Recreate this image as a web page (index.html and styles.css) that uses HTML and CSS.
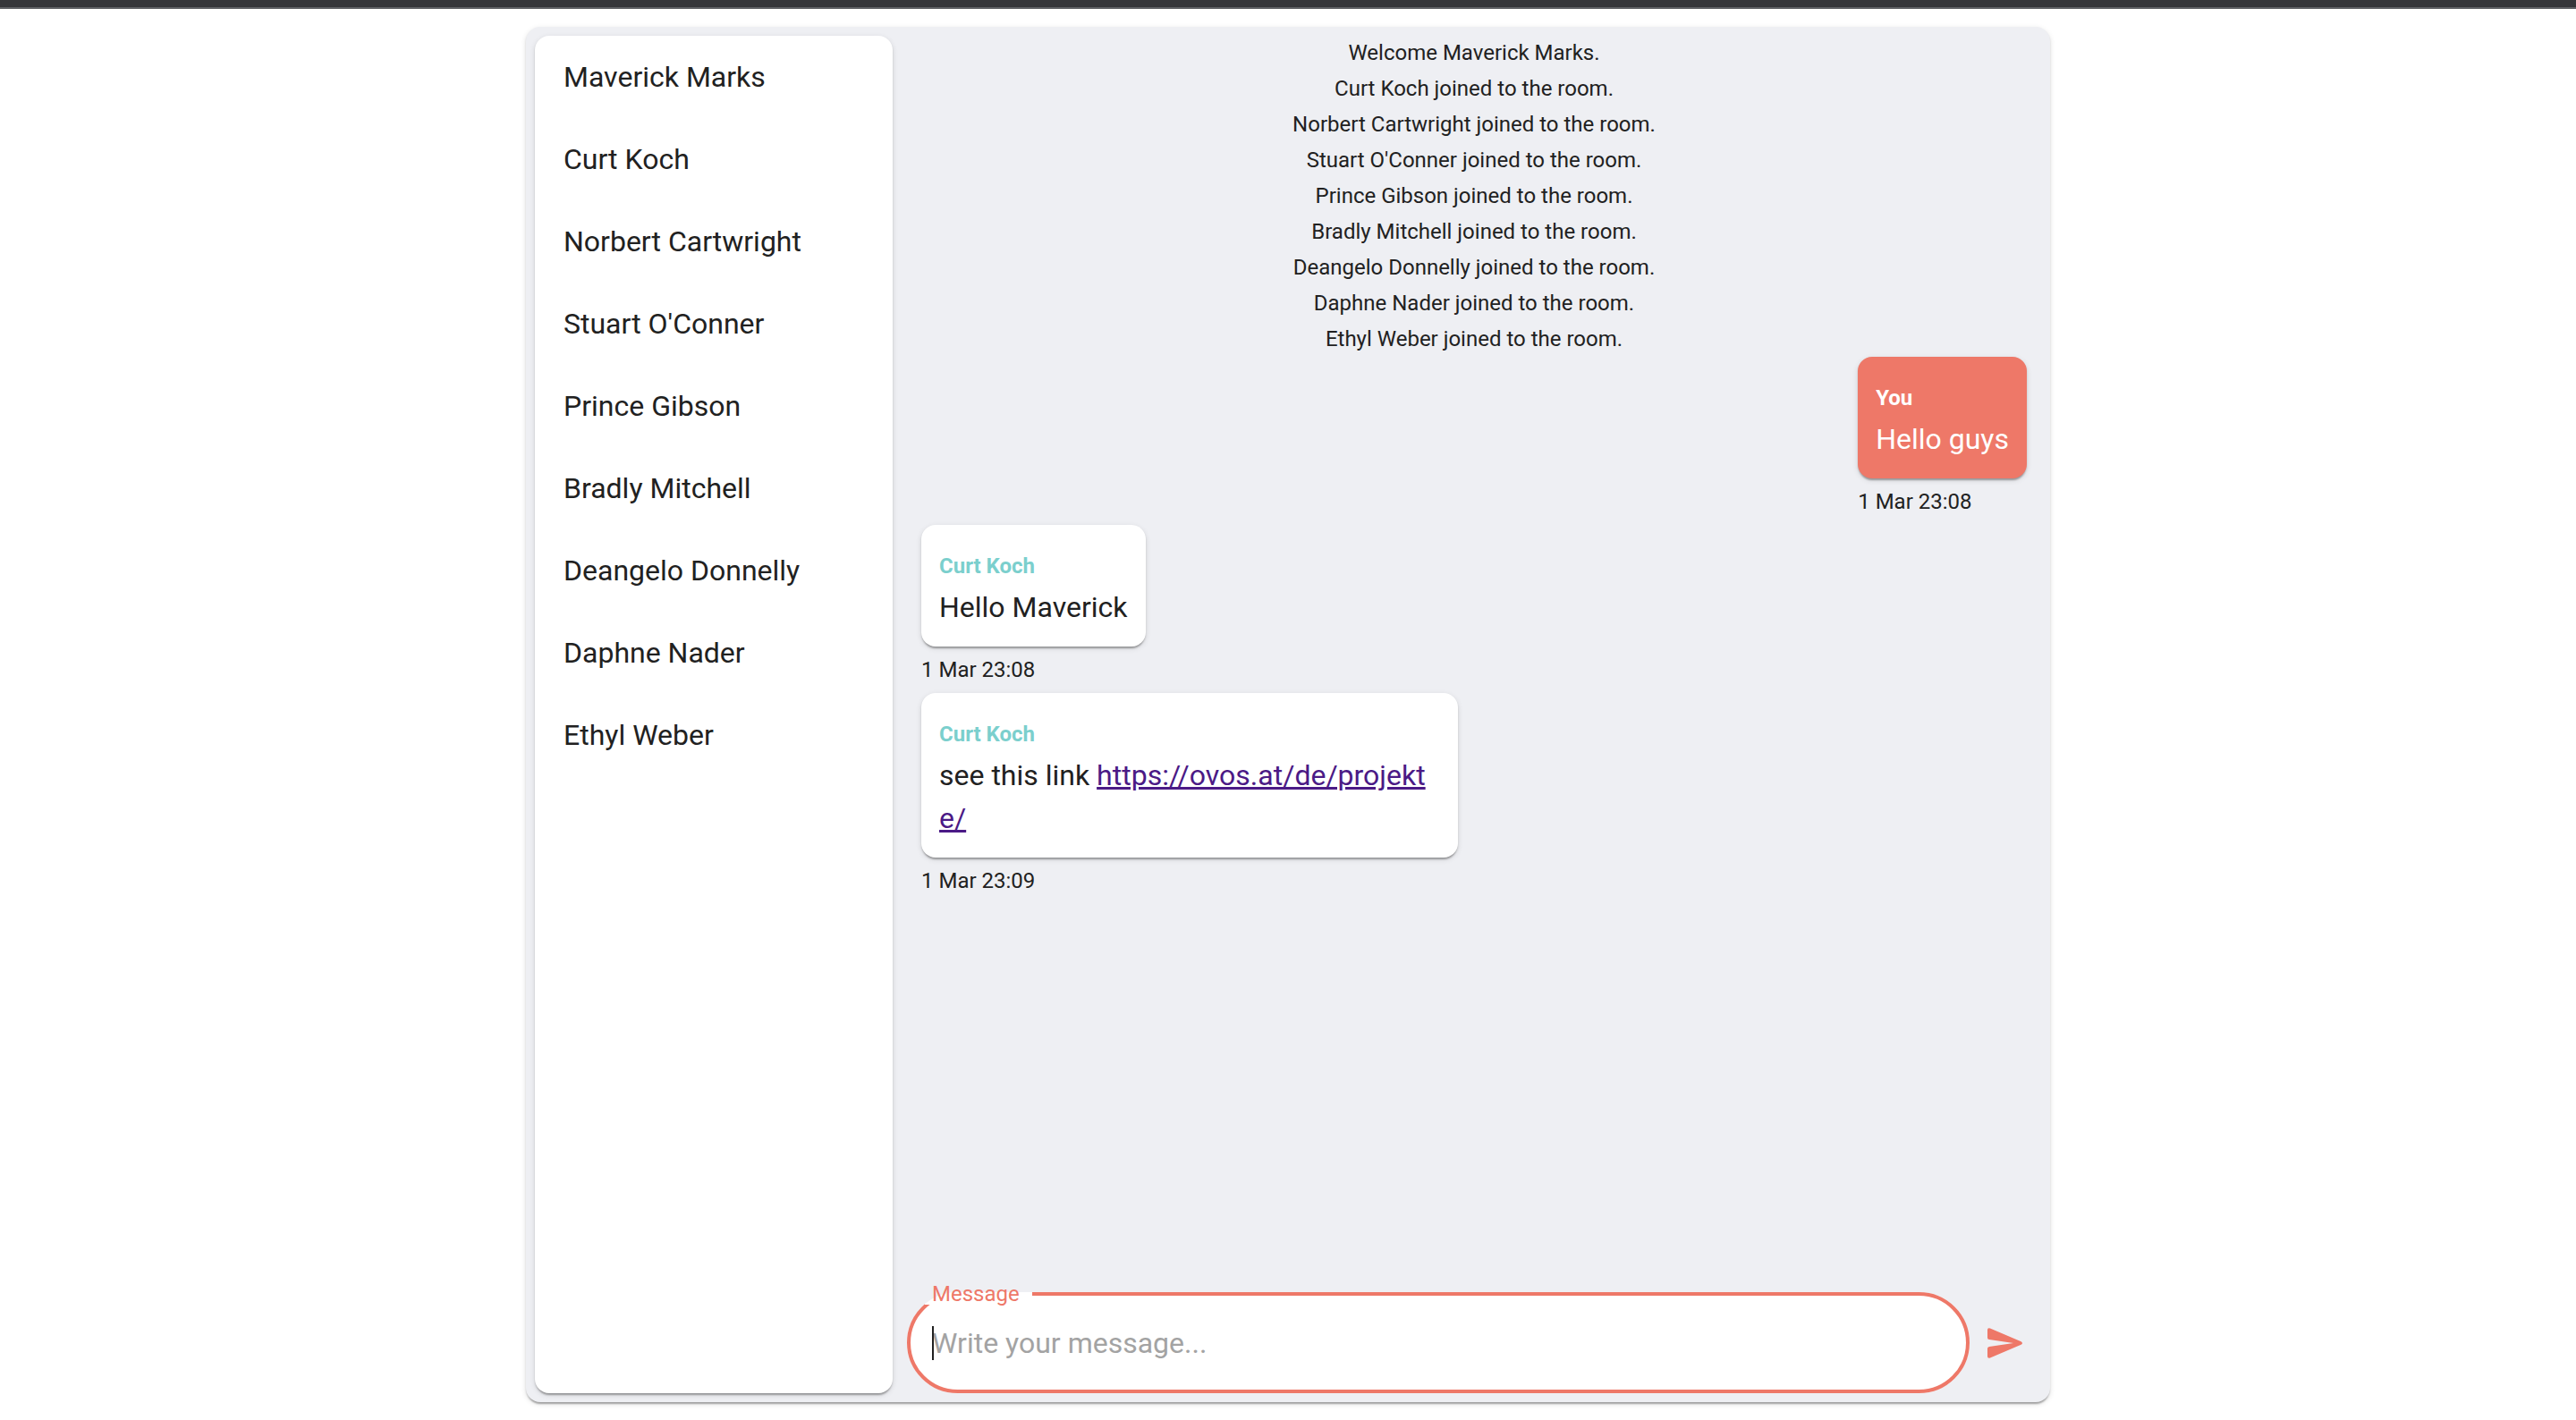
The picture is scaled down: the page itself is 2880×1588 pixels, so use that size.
FILE: index.html
```html
<!DOCTYPE html>
<html lang="en">
<head>
<meta charset="utf-8">
<title>Chat room</title>
<link rel="stylesheet" href="styles.css">
</head>
<body>
<div class="topbar"></div>
<main class="room">
  <ul class="members">
    <li>Maverick Marks</li>
    <li>Curt Koch</li>
    <li>Norbert Cartwright</li>
    <li>Stuart O'Conner</li>
    <li>Prince Gibson</li>
    <li>Bradly Mitchell</li>
    <li>Deangelo Donnelly</li>
    <li>Daphne Nader</li>
    <li>Ethyl Weber</li>
  </ul>
  <section class="chat">
    <div class="log">
      <p class="notice">Welcome Maverick Marks.</p>
      <p class="notice">Curt Koch joined to the room.</p>
      <p class="notice">Norbert Cartwright joined to the room.</p>
      <p class="notice">Stuart O'Conner joined to the room.</p>
      <p class="notice">Prince Gibson joined to the room.</p>
      <p class="notice">Bradly Mitchell joined to the room.</p>
      <p class="notice">Deangelo Donnelly joined to the room.</p>
      <p class="notice">Daphne Nader joined to the room.</p>
      <p class="notice">Ethyl Weber joined to the room.</p>
      <article class="message message-own">
        <div class="bubble">
          <h2 class="author">You</h2>
          <p class="text">Hello guys</p>
        </div>
        <time class="time">1 Mar 23:08</time>
      </article>
      <article class="message">
        <div class="bubble">
          <h2 class="author">Curt Koch</h2>
          <p class="text">Hello Maverick</p>
        </div>
        <time class="time">1 Mar 23:08</time>
      </article>
      <article class="message">
        <div class="bubble">
          <h2 class="author">Curt Koch</h2>
          <p class="text">see this link <a class="link" href="https://ovos.at/de/projekte/">https://ovos.at/de/projekte/</a></p>
        </div>
        <time class="time">1 Mar 23:09</time>
      </article>
    </div>
    <form class="composer">
      <fieldset class="field">
        <legend class="legend"><label for="message">Message</label></legend>
        <div class="entry">
          <span class="caret"></span>
          <input class="input" id="message" type="text" placeholder="Write your message..." autocomplete="off">
        </div>
      </fieldset>
      <button class="send" type="button" aria-label="Send">
        <svg class="send-icon" viewBox="0 0 40 34" aria-hidden="true">
          <path d="M0 2.2Q0-.6 3 .4L37.6 15.2Q40.4 17 37.6 18.8L3 33.6Q0 34.6 0 31.8V23Q0 21.2 2 20.9L29 17 2 13.1Q0 12.8 0 11Z"/>
        </svg>
      </button>
    </form>
  </section>
</main>
</body>
</html>
```
FILE: styles.css
```css
:root {
  --coral: #ee7868;
  --teal: #7bcfcd;
  --ink: #212121;
  --surface: #eeeff3;
  --shadow: 0 4px 2px -2px rgba(0, 0, 0, 0.2), 0 2px 2px rgba(0, 0, 0, 0.14), 0 2px 6px rgba(0, 0, 0, 0.12);
}

* {
  box-sizing: border-box;
}

body {
  display: flex;
  flex-direction: column;
  min-height: 100vh;
  margin: 0;
  background: #fff;
  color: var(--ink);
  font-family: Roboto, "Liberation Sans", sans-serif;
  font-size: 32px;
  line-height: 48px;
}

h2,
p,
ul {
  margin: 0;
  padding: 0;
}

.topbar {
  height: 10px;
  background: #35363a;
  border-bottom: 2px solid #5f6165;
}

.room {
  display: flex;
  flex: 1;
  gap: 16px;
  width: 100%;
  max-width: 1704px;
  margin: 20px auto;
  padding: 0 10px;
  background: var(--surface);
  border-radius: 16px;
  box-shadow: var(--shadow);
}

.members {
  flex: none;
  width: 400px;
  margin: 10px 0;
  background: #fff;
  border-radius: 16px;
  box-shadow: var(--shadow);
  list-style: none;
}

.members li {
  padding: 22px 32px;
}

.chat {
  display: flex;
  flex: 1;
  flex-direction: column;
  min-width: 0;
  padding: 9px 0 10px;
}

.log {
  flex: 1;
  padding: 0 16px;
}

.notice {
  font-size: 24px;
  line-height: 40px;
  text-align: center;
}

.message {
  display: flex;
  flex-direction: column;
  align-items: flex-start;
  gap: 6px;
  width: fit-content;
  max-width: 600px;
  margin-bottom: 6px;
}

.message-own {
  margin-left: auto;
}

.bubble {
  padding: 26px 20px 20px;
  background: #fff;
  border-radius: 16px;
  box-shadow: var(--shadow);
}

.message-own .bubble {
  background: var(--coral);
  color: #fff;
}

.author {
  margin-bottom: 2px;
  color: var(--teal);
  font-size: 24px;
  font-weight: 700;
  line-height: 40px;
}

.message-own .author {
  color: #fff;
}

.text {
  word-break: break-all;
}

.link {
  color: #4b1a86;
}

.time {
  font-size: 24px;
  line-height: 40px;
}

.composer {
  display: flex;
  align-items: flex-end;
}

.field {
  flex: 1;
  min-width: 0;
  margin: 0;
  padding: 0 24px 10px 16px;
  background: #fff;
  border: 4px solid var(--coral);
  border-radius: 57px;
}

.legend {
  padding: 0 14px 0 8px;
  color: var(--coral);
  font-size: 24px;
  line-height: 24px;
}

.entry {
  position: relative;
  padding-left: 8px;
}

.caret {
  position: absolute;
  top: 24px;
  left: 8px;
  width: 2px;
  height: 38px;
  background: var(--ink);
}

.input {
  display: block;
  width: 100%;
  height: 85px;
  padding: 0;
  background: transparent;
  border: 0;
  outline: 0;
  color: var(--ink);
  font: inherit;
}

.input::placeholder {
  color: #a3a3a3;
  opacity: 1;
}

.send {
  display: flex;
  align-items: center;
  justify-content: center;
  width: 80px;
  height: 112px;
  padding: 0;
  background: none;
  border: 0;
  color: var(--coral);
  cursor: pointer;
}

.send-icon {
  width: 40px;
  height: 34px;
  fill: currentColor;
}
```
